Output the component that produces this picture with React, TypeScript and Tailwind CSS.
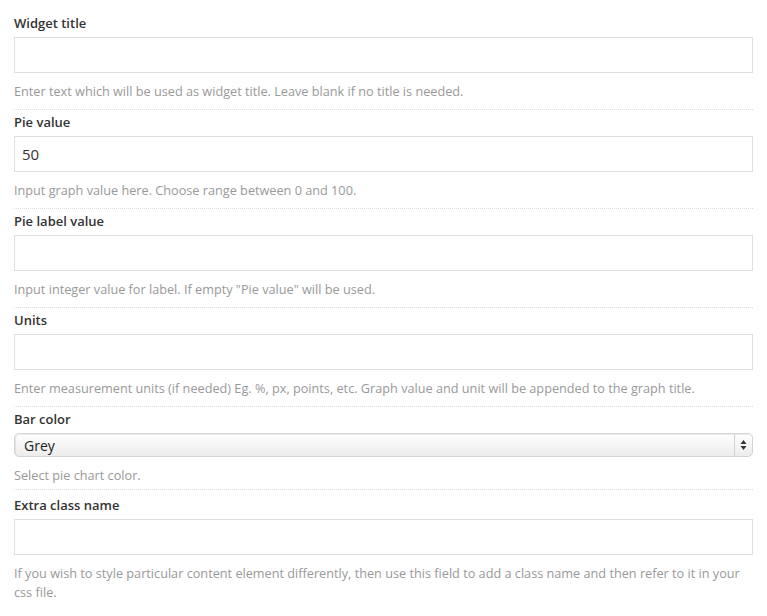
const fields = [
  {
    label: 'Widget title',
    value: '',
    desc: 'Enter text which will be used as widget title. Leave blank if no title is needed.',
  },
  {
    label: 'Pie value',
    value: '50',
    desc: 'Input graph value here. Choose range between 0 and 100.',
  },
  {
    label: 'Pie label value',
    value: '',
    desc: 'Input integer value for label. If empty "Pie value" will be used.',
  },
  {
    label: 'Units',
    value: '',
    desc: 'Enter measurement units (if needed) Eg. %, px, points, etc. Graph value and unit will be appended to the graph title.',
  },
];

function Label({ children }: { children: React.ReactNode }) {
  return <div className="text-[13px] leading-[18px] font-semibold text-[#333] mb-[5px]">{children}</div>;
}

function Desc({ children }: { children: React.ReactNode }) {
  return <div className="text-[12.7px] leading-[19px] text-[#999] mt-[9px]">{children}</div>;
}

function TextInput({ value }: { value: string }) {
  return (
    <div className="h-[36px] border border-[#dfdfdf] bg-white flex items-center px-[7px] text-[15px] text-[#333]">
      {value}
    </div>
  );
}

function SelectBox() {
  return (
    <div className="h-[24px] rounded-[5px] border border-[#d4d4d4] bg-gradient-to-b from-[#ffffff] to-[#ececec] shadow-[inset_1px_1px_1px_rgba(0,0,0,0.08)] flex items-center">
      <span className="flex-1 pl-[9px] text-[14px] text-[#222]">Grey</span>
      <div className="w-[18px] h-full border-l border-[#d0d0d0] flex items-center justify-center">
        <svg width="7" height="12" viewBox="0 0 7 12">
          <path d="M3.5 1 L6.5 5 L0.5 5 Z" fill="#333" />
          <path d="M3.5 11 L6.5 7 L0.5 7 Z" fill="#333" />
        </svg>
      </div>
    </div>
  );
}

export default function App() {
  return (
    <div
      className="w-[767px] h-[616px] bg-white px-[14px] pt-[11px] overflow-hidden"
      style={{ fontFamily: '"Open Sans", "Noto Sans", sans-serif' }}
    >
      {fields.map((f) => (
        <div key={f.label} className="pt-[3px] pb-[8px] border-b border-dotted border-[#dcdcdc]">
          <Label>{f.label}</Label>
          <TextInput value={f.value} />
          <Desc>{f.desc}</Desc>
        </div>
      ))}
      <div className="pt-[3px] pb-[4px] border-b border-dotted border-[#dcdcdc]">
        <Label>Bar color</Label>
        <SelectBox />
        <Desc>Select pie chart color.</Desc>
      </div>
      <div className="pt-[6px]">
        <Label>Extra class name</Label>
        <TextInput value="" />
        <Desc>
          If you wish to style particular content element differently, then use this field to add a class name and then
          refer to it in your css file.
        </Desc>
      </div>
    </div>
  );
}
